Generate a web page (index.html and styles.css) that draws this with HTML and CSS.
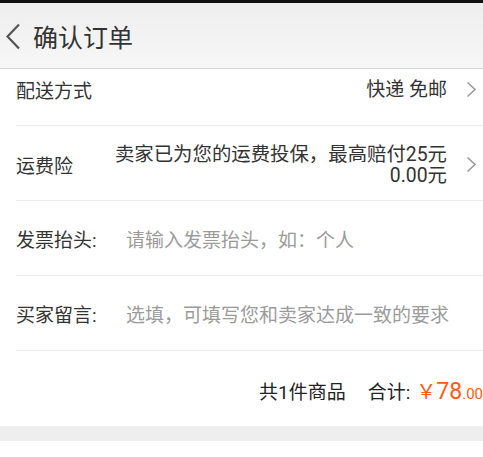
FILE: index.html
```html
<!DOCTYPE html>
<html lang="zh-CN">
<head>
<meta charset="utf-8">
<link rel="stylesheet" href="styles.css">
</head>
<body>
<div class="statusbar"></div>
<header class="header">
  <svg class="back" width="16" height="27" viewBox="0 0 16 27"><polyline points="14,1.5 2.5,13.5 14,25.5" fill="none" stroke="#555" stroke-width="2.2"/></svg>
  <h1 class="title">确认订单</h1>
</header>
<main class="list">
  <div class="row row-first">
    <span class="label">配送方式</span>
    <span class="value">快递 免邮</span>
    <svg class="chev" width="11" height="17" viewBox="0 0 11 17"><polyline points="1.5,1.5 9,8.5 1.5,15.5" fill="none" stroke="#9a9a9a" stroke-width="1.6"/></svg>
  </div>
  <div class="row row-ins">
    <span class="label">运费险</span>
    <span class="value multi">卖家已为您的运费投保，最高赔付25元<br>0.00元</span>
    <svg class="chev" width="11" height="17" viewBox="0 0 11 17"><polyline points="1.5,1.5 9,8.5 1.5,15.5" fill="none" stroke="#9a9a9a" stroke-width="1.6"/></svg>
  </div>
  <div class="row">
    <span class="label fixed">发票抬头:</span>
    <span class="placeholder">请输入发票抬头，如：个人</span>
  </div>
  <div class="row">
    <span class="label fixed">买家留言:</span>
    <span class="placeholder">选填，可填写您和卖家达成一致的要求</span>
  </div>
  <div class="total">
    <span class="count">共1件商品</span>
    <span class="sum">合计:</span>
    <span class="price"><span class="yen">￥</span><span class="int">78</span><span class="dec">.00</span></span>
  </div>
  <div class="band"></div>
</main>
</body>
</html>
```
FILE: styles.css
```css
* { box-sizing: border-box; margin: 0; padding: 0; }
html, body { background: #fff; }
body {
  width: 483px;
  height: 457px;
  overflow: hidden;
  font-family: Roboto, "Noto Sans CJK SC", sans-serif;
  color: #333;
}
.statusbar { height: 3px; background: #111; }
.header {
  height: 66px;
  display: flex;
  align-items: center;
  background: linear-gradient(#eeeeee, #f7f7f7);
  border-bottom: 1px solid #d6d6d6;
  padding-left: 5px;
}
.back { display: block; margin-right: 12px; margin-top: 1px; }
.title {
  font-size: 25px;
  font-weight: normal;
  color: #333;
}
.list { display: flex; flex-direction: column; }
.row {
  margin-left: 16px;
  height: 75px;
  border-bottom: 1px solid #ececec;
  display: flex;
  align-items: center;
  padding-right: 6px;
  font-size: 19px;
}
.row-first { height: 57px; padding-bottom: 15px; }
.row-ins { padding-top: 3px; }
.label { color: #333; flex: none; }
.label.fixed { width: 110px; }
.value {
  margin-left: auto;
  text-align: right;
  color: #333;
  line-height: 21px;
}
.value.multi { font-size: 19.4px; }
.chev { margin-left: 19px; flex: none; display: block; }
.placeholder { color: #9b9b9b; }
.total {
  height: 75px;
  display: flex;
  align-items: center;
  justify-content: flex-end;
  font-size: 19px;
  color: #222;
  padding-top: 4px;
}
.sum { margin-left: 22px; }
.price { color: #ff5a12; margin-left: 6px; white-space: nowrap; }
.yen { font-size: 20px; }
.int { font-size: 23px; }
.dec { font-size: 15px; }
.band { height: 15px; background: #eeeeee; }
```
